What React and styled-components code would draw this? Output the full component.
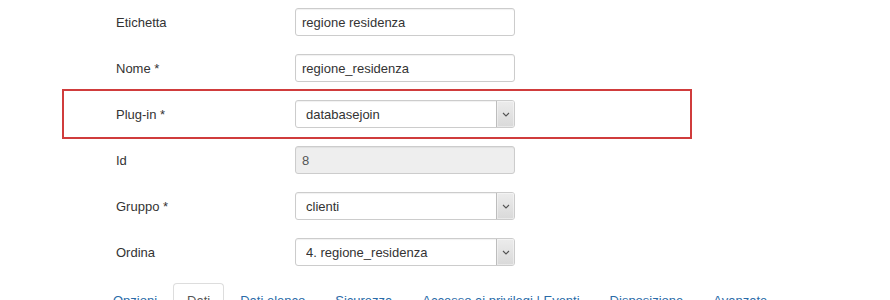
import React from "react";
import styled, { createGlobalStyle, css } from "styled-components";

const GlobalStyle = createGlobalStyle`
  body {
    margin: 0;
    background: #fff;
    font-family: "Liberation Sans", Arial, sans-serif;
    font-size: 13px;
    color: #333;
  }
`;

const Page = styled.div`
  padding: 8px 0 0 116px;
  height: 300px;
  overflow: hidden;
  box-sizing: border-box;
`;

const Row = styled.div`
  position: relative;
  display: grid;
  grid-template-columns: 179px 220px;
  align-items: center;
  height: 28px;
  margin-bottom: 18px;

  ${(p) =>
    p.$highlight &&
    css`
      &::before {
        content: "";
        position: absolute;
        left: -54px;
        top: -11px;
        width: 630px;
        height: 50px;
        border: 2px solid #d03c3c;
        box-sizing: border-box;
        pointer-events: none;
      }
    `}
`;

const Label = styled.label`
  font-size: 13px;
  color: #333;
`;

const fieldBox = css`
  box-sizing: border-box;
  height: 28px;
  border: 1px solid #ccc;
  border-radius: 3px;
  box-shadow: inset 0 1px 1px rgba(0, 0, 0, 0.06);
  font-family: "Liberation Sans", Arial, sans-serif;
  font-size: 13px;
  color: #333;
`;

const TextInput = styled.input`
  ${fieldBox}
  width: 220px;
  padding: 0 6px;
  background: ${(p) => (p.disabled ? "#eee" : "#fff")};
  color: ${(p) => (p.disabled ? "#555" : "#333")};
  &:focus {
    outline: none;
  }
`;

const SelectWrap = styled.div`
  ${fieldBox}
  width: 220px;
  display: flex;
  align-items: stretch;
  background: #fff;
  overflow: hidden;
`;

const NativeSelect = styled.select`
  flex: 1;
  appearance: none;
  border: none;
  background: transparent;
  padding: 0 10px;
  font-family: inherit;
  font-size: 13px;
  color: #333;
  &:focus {
    outline: none;
  }
`;

const ArrowButton = styled.span`
  width: 17px;
  display: flex;
  align-items: center;
  justify-content: center;
  border-left: 1px solid #bdbdbd;
  background: linear-gradient(#ececec, #d9d9d9);
  box-shadow: inset 0 0 0 1px rgba(255, 255, 255, 0.4);
`;

const Tabs = styled.ul`
  display: flex;
  list-style: none;
  margin: -1px 0 0 -17px;
  padding: 0;
  border-bottom: 1px solid #ddd;
`;

const Tab = styled.li`
  margin-right: 2px;
  padding: 8px 13px 6px;
  line-height: 18px;
  font-size: 13px;
  white-space: nowrap;
  border: 1px solid transparent;
  border-radius: 4px 4px 0 0;
  color: ${(p) => (p.$active ? "#555" : "#2a6ba8")};
  ${(p) =>
    p.$active &&
    css`
      border-color: #ddd;
      border-bottom-color: #fff;
      background: #fff;
    `}
`;

const Chevron = () => (
  <svg width="8" height="5" viewBox="0 0 8 5">
    <path d="M1 1 L4 4 L7 1" fill="none" stroke="#555" strokeWidth="1.1" />
  </svg>
);

const SelectField = ({ value }) => (
  <SelectWrap>
    <NativeSelect defaultValue={value}>
      <option value={value}>{value}</option>
    </NativeSelect>
    <ArrowButton>
      <Chevron />
    </ArrowButton>
  </SelectWrap>
);

const tabs = [
  "Opzioni",
  "Dati",
  "Dati elenco",
  "Sicurezza",
  "Accesso ai privilegi | Eventi",
  "Disposizione",
  "Avanzate",
];

export default function App() {
  return (
    <>
      <GlobalStyle />
      <Page>
        <Row>
          <Label>Etichetta</Label>
          <TextInput defaultValue="regione residenza" />
        </Row>
        <Row>
          <Label>Nome *</Label>
          <TextInput defaultValue="regione_residenza" />
        </Row>
        <Row $highlight>
          <Label>Plug-in *</Label>
          <SelectField value="databasejoin" />
        </Row>
        <Row>
          <Label>Id</Label>
          <TextInput defaultValue="8" disabled />
        </Row>
        <Row>
          <Label>Gruppo *</Label>
          <SelectField value="clienti" />
        </Row>
        <Row>
          <Label>Ordina</Label>
          <SelectField value="4. regione_residenza" />
        </Row>
        <Tabs>
          {tabs.map((t) => (
            <Tab key={t} $active={t === "Dati"}>
              {t}
            </Tab>
          ))}
        </Tabs>
      </Page>
    </>
  );
}
